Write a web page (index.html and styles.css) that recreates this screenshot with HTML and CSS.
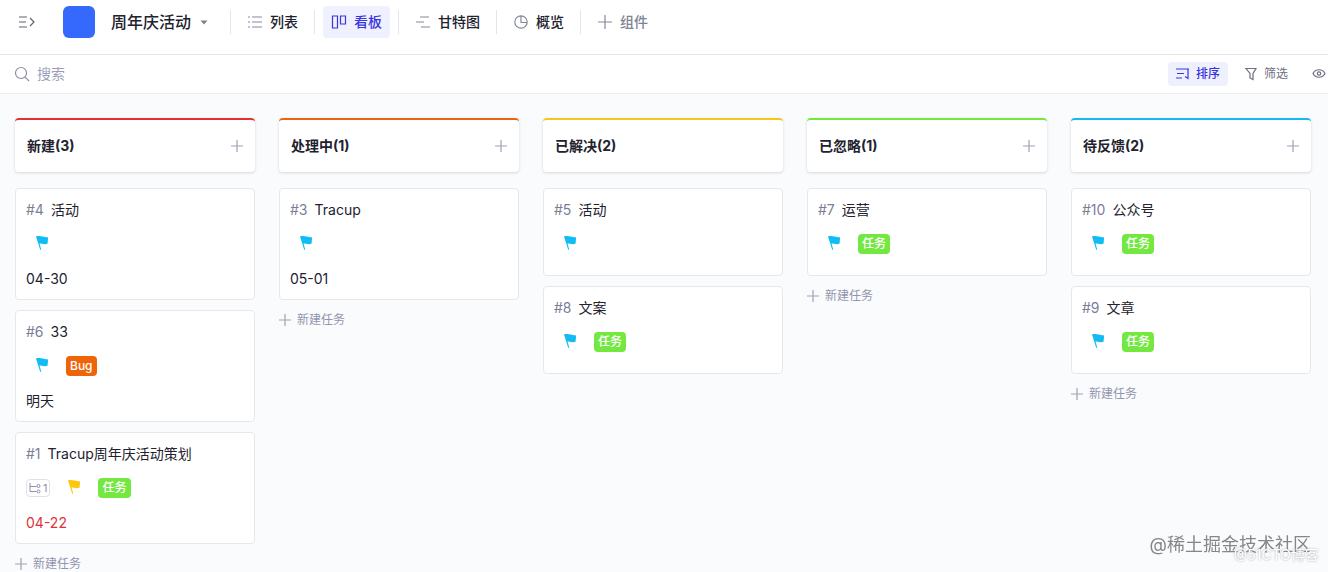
FILE: index.html
```html
<!DOCTYPE html>
<html lang="zh-CN">
<head>
    <meta charset="UTF-8">
    <meta name="viewport" content="width=device-width, initial-scale=1.0">
    <title>周年庆活动</title>
    <link rel="stylesheet" href="styles.css">
</head>
<body>
    <!-- shared icons -->
    <svg class="sprite" aria-hidden="true">
        <symbol id="flag" viewBox="0 0 12 14">
            <path d="M0 .4C2.5-.3 4.5 0 6.5.6c1.7.5 3.5.6 5.7.8L11.500 7.800C9.500 8.500 7.500 8 5.800 7.700 4.800 7.500 4 7.400 3.500 7.500L5.300 13.800H4.200Z"/>
        </symbol>
        <symbol id="plus" viewBox="0 0 12 12">
            <path d="M6 0v12M0 6h12"/>
        </symbol>
    </svg>

    <header class="topbar">
        <button class="menu-btn" aria-label="菜单">
            <svg class="line" width="18" height="14" viewBox="0 0 18 14"><path d="M1 2h8M1 7h7M1 12h8M12 3l4 4-4 4"/></svg>
        </button>
        <span class="project-logo"></span>
        <button class="project-name">周年庆活动
            <svg width="8" height="5" viewBox="0 0 8 5"><path d="M.5.500h7L4 4.500z"/></svg>
        </button>
        <nav class="tabs">
            <a class="tab" href="#list">
                <svg class="line" width="16" height="14" viewBox="0 0 16 14"><path d="M1 2h2M1 7h2M1 12h2M5 2h10M5 7h10M5 12h10"/></svg>列表
            </a>
            <a class="tab active" href="#board">
                <svg class="line" width="16" height="14" viewBox="0 0 16 14"><path d="M1.500 1h5v12h-5zM9.500 1h5v8h-5z"/></svg>看板
            </a>
            <a class="tab" href="#gantt">
                <svg class="line" width="16" height="14" viewBox="0 0 16 14"><path d="M5 2h9M1 7h8M6 12h9"/></svg>甘特图
            </a>
            <a class="tab" href="#overview">
                <svg class="line" width="16" height="14" viewBox="0 0 16 14"><path d="M8 .800a6.200 6.200 0 1 0 0 12.400A6.200 6.200 0 0 0 8 .800zM8 1v6.500h6"/></svg>概览
            </a>
            <button class="tab add">
                <svg class="line" width="16" height="14" viewBox="0 0 16 14"><path d="M8 0v14M1 7h14"/></svg>组件
            </button>
        </nav>
    </header>

    <div class="toolbar">
        <label class="search">
            <svg class="line" width="16" height="16" viewBox="0 0 16 16"><circle cx="7" cy="7" r="5.500"/><path d="M11 11l4 4"/></svg>
            <input type="text" placeholder="搜索" aria-label="搜索">
        </label>
        <button class="tool active">
            <svg class="line" width="14" height="14" viewBox="0 0 14 14"><path d="M0 2h13M1 6.500h7M0 11h6M12 2v9.500l-3-2"/></svg>排序
        </button>
        <button class="tool">
            <svg class="line" width="14" height="14" viewBox="0 0 14 14"><path d="M2 1.500h10L9 6.500v6l-3-1.500v-4.500z"/></svg>筛选
        </button>
        <button class="tool eye" aria-label="显示">
            <svg class="line" width="14" height="14" viewBox="0 0 14 14"><path d="M1 6.500c2.500-5 9.500-5 12 0-2.500 5-9.500 5-12 0z"/><circle cx="7" cy="6.500" r="1.700"/></svg>
        </button>
    </div>

    <main class="board">
        <section class="column">
            <div class="column-head red">
                <h2>新建(3)</h2>
                <button aria-label="添加"><svg class="plus"><use href="#plus"/></svg></button>
            </div>
            <article class="card">
                <h3><span>#4</span>活动</h3>
                <div class="meta"><svg class="flag"><use href="#flag"/></svg></div>
                <time>04-30</time>
            </article>
            <article class="card">
                <h3><span>#6</span>33</h3>
                <div class="meta"><svg class="flag"><use href="#flag"/></svg><span class="tag bug">Bug</span></div>
                <time>明天</time>
            </article>
            <article class="card">
                <h3><span>#1</span>Tracup周年庆活动策划</h3>
                <div class="meta">
                    <span class="subtasks"><svg class="line" width="12" height="12" viewBox="0 0 12 12"><path d="M1 1v8.500h6.500M1 4.500h6.500"/><circle cx="9.500" cy="4" r="1.500"/><circle cx="9.500" cy="9.500" r="1.500"/></svg>1</span>
                    <svg class="flag yellow"><use href="#flag"/></svg>
                    <span class="tag">任务</span>
                </div>
                <time class="overdue">04-22</time>
            </article>
            <button class="new-task"><svg class="plus"><use href="#plus"/></svg>新建任务</button>
        </section>

        <section class="column">
            <div class="column-head orange">
                <h2>处理中(1)</h2>
                <button aria-label="添加"><svg class="plus"><use href="#plus"/></svg></button>
            </div>
            <article class="card">
                <h3><span>#3</span>Tracup</h3>
                <div class="meta"><svg class="flag"><use href="#flag"/></svg></div>
                <time>05-01</time>
            </article>
            <button class="new-task"><svg class="plus"><use href="#plus"/></svg>新建任务</button>
        </section>

        <section class="column">
            <div class="column-head gold">
                <h2>已解决(2)</h2>
            </div>
            <article class="card">
                <h3><span>#5</span>活动</h3>
                <div class="meta"><svg class="flag"><use href="#flag"/></svg></div>
            </article>
            <article class="card">
                <h3><span>#8</span>文案</h3>
                <div class="meta"><svg class="flag"><use href="#flag"/></svg><span class="tag">任务</span></div>
            </article>
        </section>

        <section class="column">
            <div class="column-head green">
                <h2>已忽略(1)</h2>
                <button aria-label="添加"><svg class="plus"><use href="#plus"/></svg></button>
            </div>
            <article class="card">
                <h3><span>#7</span>运营</h3>
                <div class="meta"><svg class="flag"><use href="#flag"/></svg><span class="tag">任务</span></div>
            </article>
            <button class="new-task"><svg class="plus"><use href="#plus"/></svg>新建任务</button>
        </section>

        <section class="column">
            <div class="column-head blue">
                <h2>待反馈(2)</h2>
                <button aria-label="添加"><svg class="plus"><use href="#plus"/></svg></button>
            </div>
            <article class="card">
                <h3><span>#10</span>公众号</h3>
                <div class="meta"><svg class="flag"><use href="#flag"/></svg><span class="tag">任务</span></div>
            </article>
            <article class="card">
                <h3><span>#9</span>文章</h3>
                <div class="meta"><svg class="flag"><use href="#flag"/></svg><span class="tag">任务</span></div>
            </article>
            <button class="new-task"><svg class="plus"><use href="#plus"/></svg>新建任务</button>
        </section>
    </main>

    <div class="watermark">@稀土掘金技术社区</div>
    <div class="watermark light">@51CTO博客</div>
</body>
</html>
```

FILE: styles.css
```css
* {
    box-sizing: border-box;
}
body {
    margin: 0;
    height: 100vh;
    display: flex;
    flex-direction: column;
    overflow: hidden;
    font-family: Inter, "Noto Sans CJK SC", sans-serif;
    font-size: 14px;
    line-height: 20px;
    color: #22222e;
    background-color: #fafbfd;
}
button {
    font: inherit;
    color: inherit;
    border: none;
    background: none;
    padding: 0;
    cursor: pointer;
}
h2, h3 {
    margin: 0;
    font-size: 14px;
}
svg {
    flex: none;
}
.sprite {
    display: none;
}
.line {
    fill: none;
    stroke: currentColor;
    stroke-width: 1.2;
}

/* top bar */
.topbar {
    flex: none;
    display: flex;
    align-items: center;
    height: 55px;
    padding: 0 18px 10px;
    background-color: #fff;
    border-bottom: 1px solid #e4e5e9;
    white-space: nowrap;
}
.menu-btn {
    display: flex;
    color: #5f6272;
}
.project-logo {
    width: 32px;
    height: 32px;
    margin: 0 16px 0 27px;
    border-radius: 6px;
    background-color: #3568fd;
}
.project-name {
    display: flex;
    align-items: center;
    gap: 9px;
    margin-right: 22px;
    font-size: 16px;
    font-weight: 500;
}
.project-name svg {
    fill: #7d8090;
}
.tabs {
    display: flex;
    align-items: center;
    gap: 8px;
}
.tab {
    position: relative;
    display: flex;
    align-items: center;
    gap: 7px;
    height: 32px;
    margin-left: 9px;
    padding: 0 8px;
    border-radius: 4px;
    font-weight: 500;
    color: #22222e;
    text-decoration: none;
}
/* divider before every tab */
.tab::before {
    content: "";
    position: absolute;
    left: -9px;
    top: 4px;
    width: 1px;
    height: 24px;
    background-color: #e4e5e9;
}
.tab svg {
    color: #85889a;
}
.tab.active,
.tab.active svg {
    color: #3b35e0;
}
.tab.active {
    background-color: #eff1fe;
}
.tab.add {
    color: #7f8294;
}

/* search and filters */
.toolbar {
    flex: none;
    display: flex;
    align-items: center;
    gap: 8px;
    height: 39px;
    padding: 0 2px 0 14px;
    background-color: #fff;
    border-bottom: 1px solid #e9ebef;
}
.search {
    flex: 1;
    display: flex;
    align-items: center;
    gap: 7px;
    color: #8d90a5;
}
.search input {
    flex: 1;
    padding: 0;
    border: none;
    outline: none;
    font: inherit;
    background: none;
}
.search input::placeholder {
    color: #9c9fb8;
}
.tool {
    display: flex;
    align-items: center;
    gap: 6px;
    height: 24px;
    padding: 0 8px;
    border-radius: 4px;
    font-size: 12px;
    color: #6c6f80;
}
.tool.active {
    font-weight: 500;
    color: #3b35e0;
    background-color: #eef0fe;
}
.tool.eye {
    padding-right: 0;
}

/* board */
.board {
    flex: 1;
    display: grid;
    grid-template-columns: repeat(5, minmax(200px, 1fr));
    gap: 24px;
    padding: 24px 17px 0 15px;
}
.column-head {
    display: flex;
    align-items: center;
    justify-content: space-between;
    height: 54px;
    margin-bottom: 16px;
    padding: 0 12px;
    border-top: 2px solid;
    border-radius: 4px;
    background-color: #fff;
    box-shadow: 0 1px 3px rgba(40, 50, 80, 0.18);
}
.column-head h2 {
    font-weight: 700;
    color: #22222e;
}
.column-head button {
    display: flex;
}
.red { border-color: #e13238; }
.orange { border-color: #ea6415; }
.gold { border-color: #f6c71b; }
.green { border-color: #72e840; }
.blue { border-color: #14b9ee; }
.plus {
    width: 12px;
    height: 12px;
    fill: none;
    stroke: #a0a2b2;
    stroke-width: 1.2;
}
.card {
    margin-bottom: 10px;
    padding: 11px 10px 10px;
    border: 1px solid #e6e8ee;
    border-radius: 4px;
    background-color: #fff;
}
.card h3 {
    font-weight: 400;
}
.card h3 span {
    margin-right: 7px;
    color: #7c7d98;
}
.meta {
    display: flex;
    align-items: center;
    height: 20px;
    margin: 14px 0 11px;
}
.flag {
    width: 12px;
    height: 14px;
    margin: 0 18px 2px 10px;
    overflow: visible;
    fill: #0fbdf4;
}
.flag.yellow {
    fill: #fdc70f;
}
.tag {
    padding: 0 4px;
    border-radius: 4px;
    font-size: 12px;
    font-weight: 500;
    color: #fff;
    background-color: #72e840;
}
.tag.bug {
    background-color: #f06408;
}
.subtasks {
    display: flex;
    align-items: center;
    gap: 2px;
    height: 18px;
    margin-right: 8px;
    padding: 0 2px;
    border: 1px solid #dfe0e8;
    border-radius: 4px;
    font-size: 11px;
    color: #8d90a5;
}
.subtasks .line {
    stroke-width: 1;
}
.card time {
    display: block;
    padding-top: 4px;
}
.card .overdue {
    color: #e13238;
}
.new-task {
    display: flex;
    align-items: center;
    gap: 6px;
    font-size: 12px;
    color: #9295ae;
}

/* watermarks over the board */
.watermark {
    position: fixed;
    right: 17px;
    bottom: 15px;
    font-size: 18px;
    line-height: 24px;
    color: #85868a;
}
.watermark.light {
    right: 9px;
    bottom: 5px;
    font-size: 14px;
    color: #fff;
    text-shadow: 0 0 2px #999;
}
```
